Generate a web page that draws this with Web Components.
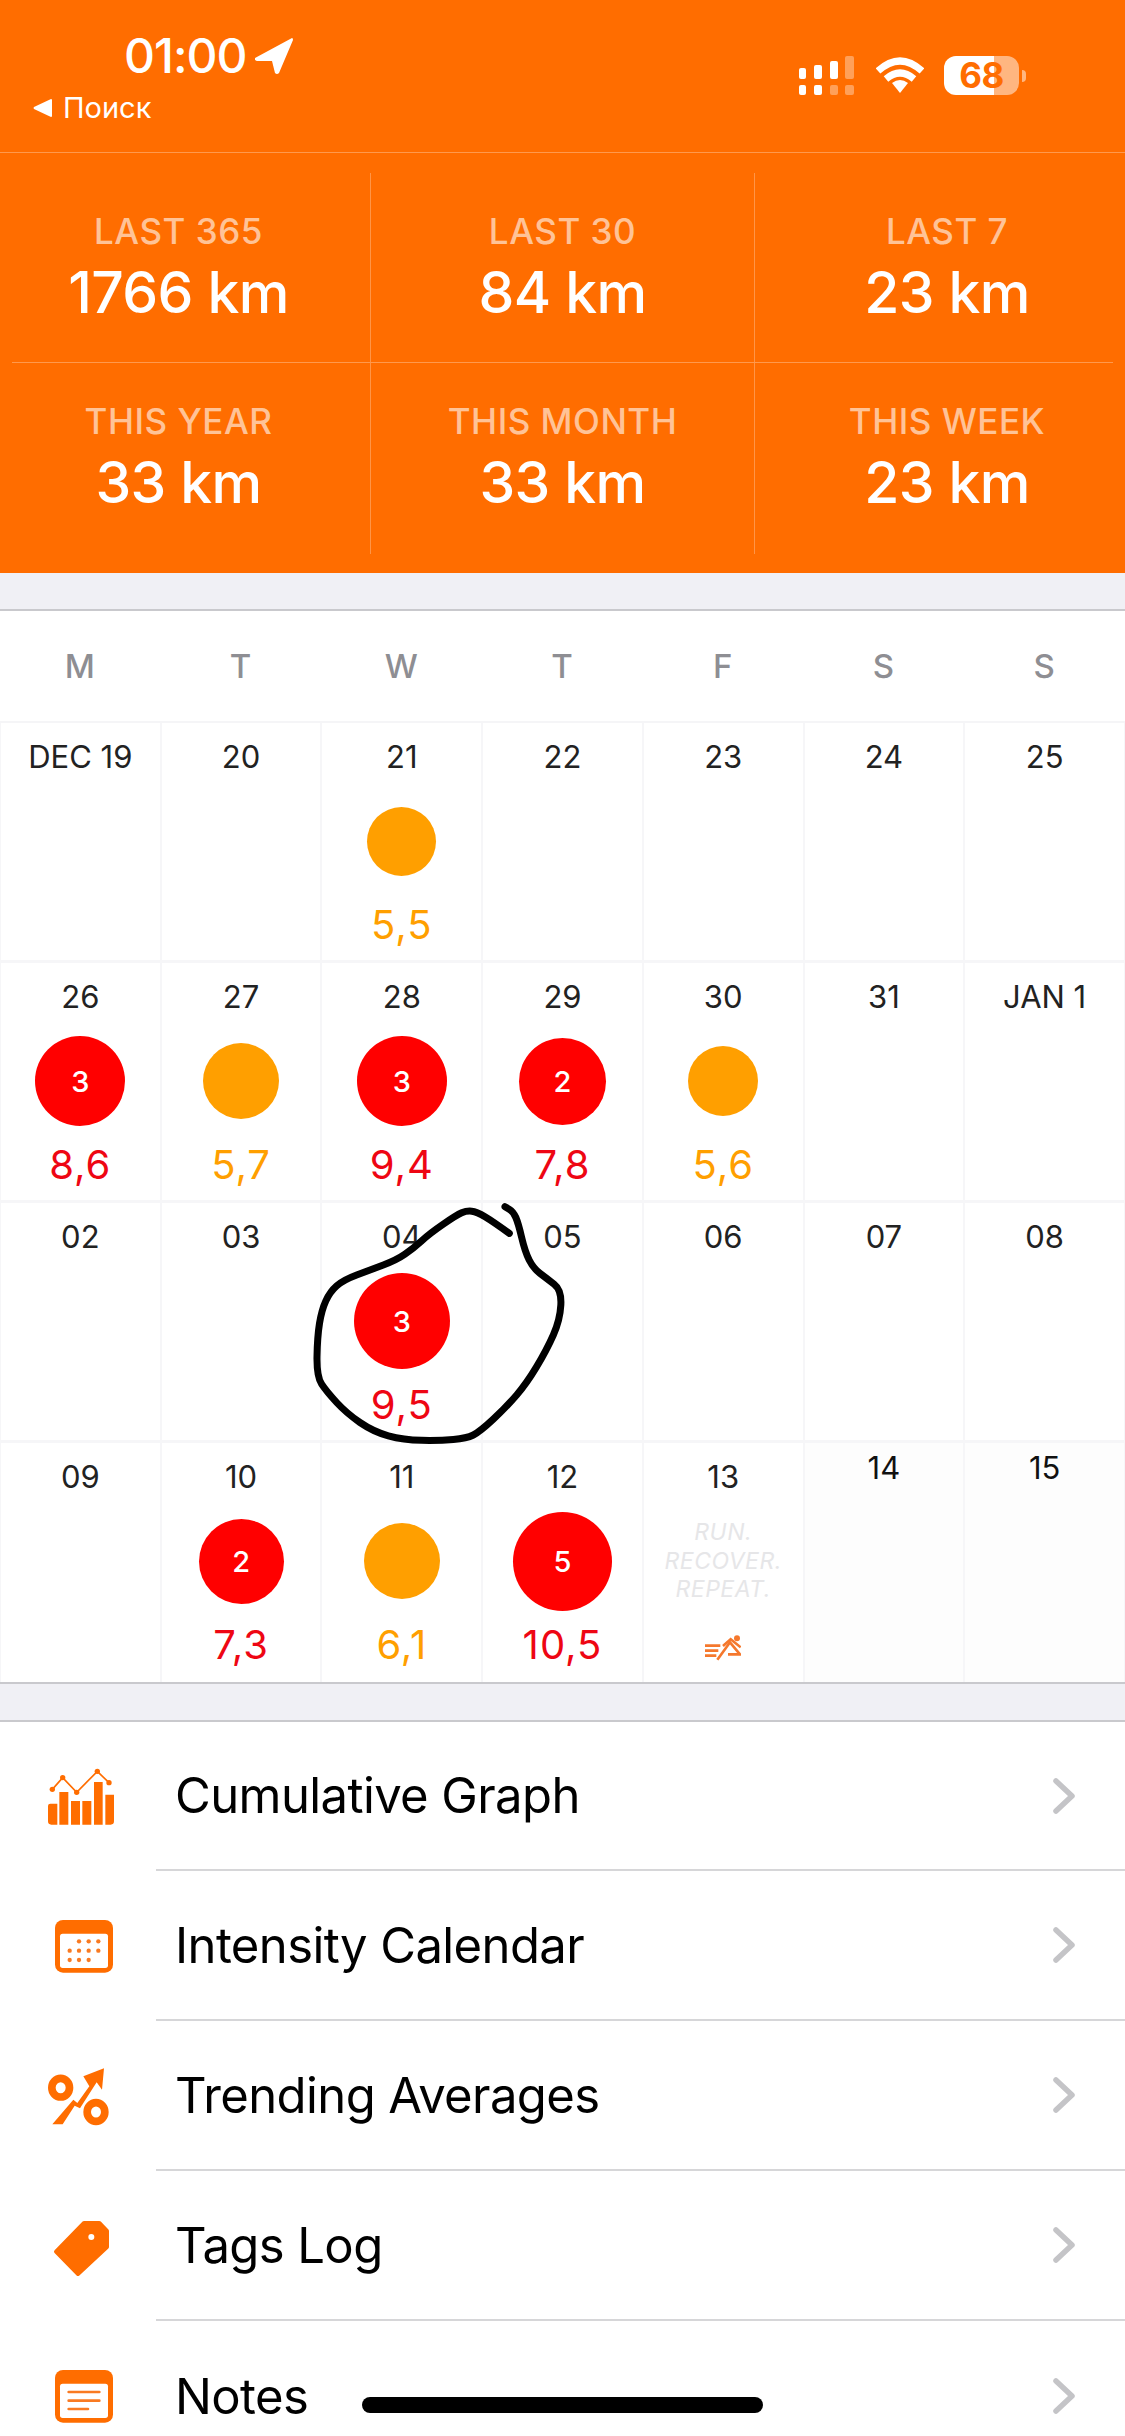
<!DOCTYPE html>
<html>
<head>
<meta charset="utf-8">
<title>Running log</title>
<style>
  html, body { margin: 0; padding: 0; background: #f0f0f5; }
  body { width: 1125px; height: 2436px; overflow: hidden; position: relative; font-family: Inter, "Liberation Sans", sans-serif; }
</style>
</head>
<body>

<phone-status></phone-status>

<stat-panel>
  <stat-row>
    <stat-cell label="LAST 365" value="1766 km"></stat-cell>
    <stat-cell label="LAST 30" value="84 km"></stat-cell>
    <stat-cell label="LAST 7" value="23 km"></stat-cell>
  </stat-row>
  <stat-row ruled>
    <stat-cell label="THIS YEAR" value="33 km"></stat-cell>
    <stat-cell label="THIS MONTH" value="33 km"></stat-cell>
    <stat-cell label="THIS WEEK" value="23 km"></stat-cell>
  </stat-row>
</stat-panel>

<month-calendar>
  <week-head>M</week-head><week-head>T</week-head><week-head>W</week-head><week-head>T</week-head><week-head>F</week-head><week-head>S</week-head><week-head>S</week-head>

  <cal-day date="DEC 19"></cal-day>
  <cal-day date="20"></cal-day>
  <cal-day date="21" size="69" level="easy" value="5,5"></cal-day>
  <cal-day date="22"></cal-day>
  <cal-day date="23"></cal-day>
  <cal-day date="24"></cal-day>
  <cal-day date="25"></cal-day>

  <cal-day date="26" size="90" level="hard" count="3" value="8,6"></cal-day>
  <cal-day date="27" size="76" level="easy" value="5,7"></cal-day>
  <cal-day date="28" size="90" level="hard" count="3" value="9,4"></cal-day>
  <cal-day date="29" size="87" level="hard" count="2" value="7,8"></cal-day>
  <cal-day date="30" size="70" level="easy" value="5,6"></cal-day>
  <cal-day date="31"></cal-day>
  <cal-day date="JAN 1"></cal-day>

  <cal-day date="02"></cal-day>
  <cal-day date="03"></cal-day>
  <cal-day date="04" size="96" level="hard" count="3" value="9,5"></cal-day>
  <cal-day date="05"></cal-day>
  <cal-day date="06"></cal-day>
  <cal-day date="07"></cal-day>
  <cal-day date="08"></cal-day>

  <cal-day date="09" bottom></cal-day>
  <cal-day date="10" bottom size="85" level="hard" count="2" value="7,3"></cal-day>
  <cal-day date="11" bottom size="76" level="easy" value="6,1"></cal-day>
  <cal-day date="12" bottom size="99" level="hard" count="5" value="10,5"></cal-day>
  <cal-day date="13" bottom>
    <run-tagline>RUN.<br>RECOVER.<br>REPEAT.</run-tagline>
    <svg slot="foot" style="margin-top:8px" width="36" height="26" viewBox="258 622 108 78" fill="none" stroke="#f5782d" stroke-width="8">
      <path d="M258 654h46M258 669h40M258 684h34"/>
      <path d="M295 696l38-52 30 36h-36"/>
      <path d="M312 655l23-20 30 24"/>
      <circle cx="354" cy="632" r="9" fill="#f5782d" stroke="none"/>
    </svg>
  </cal-day>
  <cal-day date="14" bottom future></cal-day>
  <cal-day date="15" bottom future></cal-day>
</month-calendar>

<menu-list>
  <menu-row first label="Cumulative Graph">
    <svg slot="icon" width="156" height="120" viewBox="-60 -15 468 360" fill="#ff6d00">
      <path d="M84 192q0-7 7-7h21v63h-18q-10 0-10-10zM118 150h27v98h-27zM153 177h27v71h-27zM187 177h27v71h-27zM222 120h26v128h-26zM256 158h26v80q0 10-10 10h-16z"/>
      <path d="M97 142L128 107 170 151 232 88 267 122" fill="none" stroke="#ff6d00" stroke-width="5"/>
      <circle cx="97" cy="142" r="8"/><circle cx="128" cy="107" r="8"/><circle cx="170" cy="151" r="8"/><circle cx="232" cy="88" r="8"/><circle cx="267" cy="122" r="8"/>
    </svg>
  </menu-row>
  <menu-row label="Intensity Calendar">
    <svg slot="icon" width="156" height="120" viewBox="-60 435 468 360" fill="#ff6d00">
      <rect x="105" y="537" width="174" height="158" rx="24"/>
      <rect x="120" y="578" width="144" height="103" rx="8" fill="#fff"/>
      <g fill="#f97a22">
        <circle cx="177" cy="601" r="6.5"/><circle cx="206" cy="601" r="6.5"/><circle cx="235" cy="601" r="6.5"/>
        <circle cx="149" cy="629" r="6.5"/><circle cx="177" cy="629" r="6.5"/><circle cx="206" cy="629" r="6.5"/><circle cx="235" cy="629" r="6.5"/>
        <circle cx="149" cy="657" r="6.5"/><circle cx="177" cy="657" r="6.5"/><circle cx="206" cy="657" r="6.5"/>
      </g>
    </svg>
  </menu-row>
  <menu-row label="Trending Averages">
    <svg slot="icon" width="156" height="120" viewBox="-60 -75 468 360" fill="#ff6d00">
      <ellipse cx="122" cy="80" rx="26.5" ry="28" fill="none" stroke="#ff6d00" stroke-width="23"/>
      <ellipse cx="228" cy="153" rx="26.5" ry="28" fill="none" stroke="#ff6d00" stroke-width="23"/>
      <path d="M97 190L160 116 172 126 208 76 190 46 252 22 246 86 230 64 180 142 164 134 128 190z"/>
    </svg>
  </menu-row>
  <menu-row label="Tags Log">
    <svg slot="icon" width="156" height="120" viewBox="-60 375 468 360" fill="#ff6d00">
      <path d="M192 486H238L261 510V558L174 639 108 572z" stroke="#ff6d00" stroke-width="12" stroke-linejoin="round"/>
      <circle cx="214" cy="528" r="9" fill="#fff"/>
    </svg>
  </menu-row>
  <menu-row label="Notes">
    <svg slot="icon" width="156" height="120" viewBox="-60 825 468 360" fill="#ff6d00">
      <rect x="105" y="927" width="174" height="158" rx="24"/>
      <rect x="120" y="968" width="144" height="103" rx="8" fill="#fff"/>
      <path d="M146 993h92M146 1019h92M146 1044h58" stroke="#f97a22" stroke-width="8" stroke-linecap="round"/>
    </svg>
  </menu-row>
</menu-list>

<hand-scribble></hand-scribble>
<home-bar></home-bar>

<script>
// status bar + back link
class PhoneStatus extends HTMLElement {
  connectedCallback() {
    let shadow = this.attachShadow({mode: 'open'});
    shadow.innerHTML = `
    <style>
      :host { display: flex; justify-content: space-between; height: 152px; background: #ff6d00; color: #fff; border-bottom: 1px solid rgba(255,255,255,.3); }
      .left { padding: 28px 0 0 33px; }
      .time { display: flex; align-items: center; gap: 9px; margin-left: 91px; font-size: 48px; line-height: 56px; font-weight: 500; letter-spacing: -1px; }
      .back { display: flex; align-items: center; gap: 11px; margin-top: 6px; font-size: 29px; line-height: 36px; }
      .right { display: flex; align-items: flex-start; padding: 56px 99px 0 0; }
      .battery { box-sizing: border-box; width: 75px; height: 39px; margin-left: 20px; border-radius: 12px; text-align: center; font-size: 35px; line-height: 39px; font-weight: 700; letter-spacing: -.5px; color: #ff6d00; background: linear-gradient(90deg, #fff 67%, rgba(255,255,255,.5) 67%); }
      .nub { width: 4px; height: 12px; margin: 14px 0 0 3px; border-radius: 0 4px 4px 0; background: rgba(255,255,255,.5); }
      svg { display: block; }
    </style>
    <div class="left">
      <div class="time">01:00
        <svg width="38" height="36" viewBox="0 0 38 36" fill="#fff"><path d="M37 0L0 20q-1 2 2 3H17L20 35q2 2 4 0L38 2q0-2-1-2z"/></svg>
      </div>
      <div class="back">
        <svg width="19" height="18" viewBox="0 0 19 18" fill="#fff"><path d="M18 0q1 0 1 1v16q0 1-1 1L1 10q-1-1 0-2z"/></svg>
        <span>Поиск</span>
      </div>
    </div>
    <div class="right">
      <svg width="56" height="39" viewBox="0 0 56 39" fill="#fff">
        <rect x="0" y="12" width="7" height="11" rx="2"/><rect x="15" y="9" width="8" height="14" rx="2"/><rect x="31" y="5" width="8" height="18" rx="2"/>
        <rect x="46" y="0" width="9" height="23" rx="2" opacity=".35"/>
        <rect x="0" y="29" width="7" height="10" rx="2"/><rect x="15" y="29" width="8" height="10" rx="2"/>
        <rect x="31" y="29" width="8" height="10" rx="2" opacity=".35"/><rect x="46" y="29" width="9" height="10" rx="2" opacity=".35"/>
      </svg>
      <svg style="margin:1px 0 0 21px" width="48" height="36" viewBox="0 0 48 36" fill="none" stroke="#fff" stroke-width="7">
        <path d="M2 14Q24-6 46 14"/>
        <path d="M10 22Q24 10 38 22"/>
        <path d="M16 26L24 36 32 26Q24 20 16 26z" fill="#fff" stroke="none"/>
      </svg>
      <div class="battery">68</div>
      <div class="nub"></div>
    </div>`;
  }
}

class StatPanel extends HTMLElement {
  connectedCallback() {
    let shadow = this.attachShadow({mode: 'open'});
    shadow.innerHTML = `
    <style>
      :host { display: block; height: 420px; box-sizing: border-box; padding-top: 20px; background: #ff6d00; overflow: hidden; }
    </style>
    <slot></slot>`;
  }
}

class StatRow extends HTMLElement {
  connectedCallback() {
    let shadow = this.attachShadow({mode: 'open'});
    shadow.innerHTML = `
    <style>
      :host { display: block; }
      .rule { display: none; height: 1px; margin: 0 12px; background: rgba(255,255,255,.3); }
      :host([ruled]) .rule { display: block; }
      .cells { display: grid; grid-template-columns: repeat(3, 384px); margin-left: -13px; height: 189px; }
      :host([ruled]) .cells { height: 191px; }
    </style>
    <div class="rule"></div>
    <div class="cells"><slot></slot></div>`;
  }
}

class StatCell extends HTMLElement {
  connectedCallback() {
    let shadow = this.attachShadow({mode: 'open'});
    shadow.innerHTML = `
    <style>
      :host { display: block; text-align: center; padding-top: 38px; box-sizing: border-box; border-right: 1px solid rgba(255,255,255,.28); }
      :host(:last-child) { border-right: 0; }
      .label { font-size: 35px; line-height: 40px; color: rgba(255,255,255,.6); font-weight: 500; letter-spacing: .5px; }
      .value { font-size: 57px; line-height: 66px; margin-top: 9px; color: #fff; font-weight: 500; letter-spacing: -.6px; }
    </style>
    <div class="label">${this.getAttribute('label')}</div>
    <div class="value">${this.getAttribute('value')}</div>`;
  }
}

class MonthCalendar extends HTMLElement {
  connectedCallback() {
    let shadow = this.attachShadow({mode: 'open'});
    shadow.innerHTML = `
    <style>
      :host { display: grid; grid-template-columns: repeat(7, 1fr); grid-template-rows: 112px 240px 240px 240px 239px; margin-top: 36px; background: #fff; border-top: 2px solid #c9c9cd; border-bottom: 2px solid #c9c9cd; height: 1071px; }
    </style>
    <slot></slot>`;
  }
}

class WeekHead extends HTMLElement {
  connectedCallback() {
    let shadow = this.attachShadow({mode: 'open'});
    shadow.innerHTML = `
    <style>
      :host { display: flex; align-items: center; justify-content: center; box-sizing: border-box; padding-right: 1px; border-bottom: 2px solid #f5f5f7; font-size: 33px; color: #8e8e93; font-weight: 500; }
    </style>
    <slot></slot>`;
  }
}

// one day of the calendar, the dot grows with the distance
class CalDay extends HTMLElement {
  connectedCallback() {
    let shadow = this.attachShadow({mode: 'open'});
    let size = this.getAttribute('size');
    let count = this.getAttribute('count') || '';
    let value = this.getAttribute('value') || '';
    let dot = size ? `<div class="dot" style="width:${size}px;height:${size}px">${count}</div>` : '';
    shadow.innerHTML = `
    <style>
      :host { display: block; box-sizing: border-box; border-left: 1px solid #f6f6f8; border-right: 1px solid #f6f6f8; border-bottom: 3px solid #f6f6f8; --tone: #ff9f00; --ink: #ff9f00; text-align: center; overflow: hidden; }
      :host([bottom]) { border-bottom: 0; }
      :host([future]) { background: #fdfdfd; }
      :host([level=hard]) { --tone: #ff0000; --ink: #ee0613; }
      .date { padding-top: 16px; font-size: 31px; line-height: 36px; color: #222; white-space: nowrap; }
      :host([future]) .date { padding-top: 7px; color: #111; }
      .spot { display: flex; align-items: center; justify-content: center; height: 100px; margin-top: 16px; }
      .dot { display: flex; align-items: center; justify-content: center; border-radius: 50%; background: var(--tone); color: #fff; font-size: 29px; font-weight: 500; }
      .value { display: flex; align-items: center; justify-content: center; height: 44px; margin-top: 11px; font-size: 40px; letter-spacing: 1px; color: var(--ink); }
    </style>
    <div class="date">${this.getAttribute('date')}</div>
    <div class="spot">${dot}<slot></slot></div>
    <div class="value">${value}<slot name="foot"></slot></div>`;
  }
}

class RunTagline extends HTMLElement {
  connectedCallback() {
    let shadow = this.attachShadow({mode: 'open'});
    shadow.innerHTML = `
    <style>
      :host { display: block; font-size: 23px; line-height: 28.5px; font-style: italic; color: #e6e6e8; letter-spacing: .5px; }
    </style>
    <slot></slot>`;
  }
}

class MenuList extends HTMLElement {
  connectedCallback() {
    let shadow = this.attachShadow({mode: 'open'});
    shadow.innerHTML = `
    <style>
      :host { display: block; margin-top: 36px; background: #fff; border-top: 2px solid #c9c9cd; }
    </style>
    <slot></slot>`;
  }
}

class MenuRow extends HTMLElement {
  connectedCallback() {
    let shadow = this.attachShadow({mode: 'open'});
    shadow.innerHTML = `
    <style>
      :host { display: flex; align-items: stretch; height: 150px; }
      :host([first]) { height: 149px; }
      .icon { display: flex; align-items: center; width: 156px; flex: none; }
      .body { display: flex; align-items: center; justify-content: space-between; flex: 1; padding: 0 50px 0 19px; border-bottom: 2px solid #d6d6d8; font-size: 49px; color: #000; letter-spacing: -.6px; }
      :host(:last-child) .body { border-bottom: 0; }
      svg { display: block; }
    </style>
    <div class="icon"><slot name="icon"></slot></div>
    <div class="body">
      <span>${this.getAttribute('label')}</span>
      <svg width="22" height="36" viewBox="0 0 22 36" fill="none" stroke="#c4c4c7" stroke-width="5.5" stroke-linecap="round" stroke-linejoin="round"><path d="M3 3L19 18 3 33"/></svg>
    </div>`;
  }
}

// marker circle someone drew on the screenshot
class HandScribble extends HTMLElement {
  connectedCallback() {
    let shadow = this.attachShadow({mode: 'open'});
    let pts = [[688,160],[640,125],[590,95],[560,92],[530,105],[450,160],[400,205],[350,240],[270,270],[190,300],[150,335],[125,390],[112,470],[110,590],[140,635],[200,700],[280,755],[370,780],[480,782],[560,775],[600,755],[680,680],[740,610],[800,510],[840,420],[845,330],[800,295],[760,265],[735,215],[715,130],[700,95],[675,80]];
    let d = 'M' + pts[0].join(' ');
    for (let i = 1; i < pts.length - 1; i++) {
      let mx = (pts[i][0] + pts[i + 1][0]) / 2;
      let my = (pts[i][1] + pts[i + 1][1]) / 2;
      d += ` Q${pts[i][0]} ${pts[i][1]} ${mx} ${my}`;
    }
    d += ' L' + pts[pts.length - 1].join(' ');
    shadow.innerHTML = `
    <style>
      :host { position: absolute; left: 280px; top: 1180px; width: 320px; height: 280px; pointer-events: none; }
      svg { display: block; }
    </style>
    <svg width="320" height="280" viewBox="0 0 960 840"><path d="${d}" fill="none" stroke="#000" stroke-width="21" stroke-linecap="round" stroke-linejoin="round"/></svg>`;
  }
}

class HomeBar extends HTMLElement {
  connectedCallback() {
    let shadow = this.attachShadow({mode: 'open'});
    shadow.innerHTML = `
    <style>
      :host { position: absolute; left: 362px; top: 2397px; width: 401px; height: 16px; border-radius: 8px; background: #000; }
    </style>`;
  }
}

customElements.define('phone-status', PhoneStatus);
customElements.define('stat-panel', StatPanel);
customElements.define('stat-row', StatRow);
customElements.define('stat-cell', StatCell);
customElements.define('month-calendar', MonthCalendar);
customElements.define('week-head', WeekHead);
customElements.define('cal-day', CalDay);
customElements.define('run-tagline', RunTagline);
customElements.define('menu-list', MenuList);
customElements.define('menu-row', MenuRow);
customElements.define('hand-scribble', HandScribble);
customElements.define('home-bar', HomeBar);
</script>
</body>
</html>
